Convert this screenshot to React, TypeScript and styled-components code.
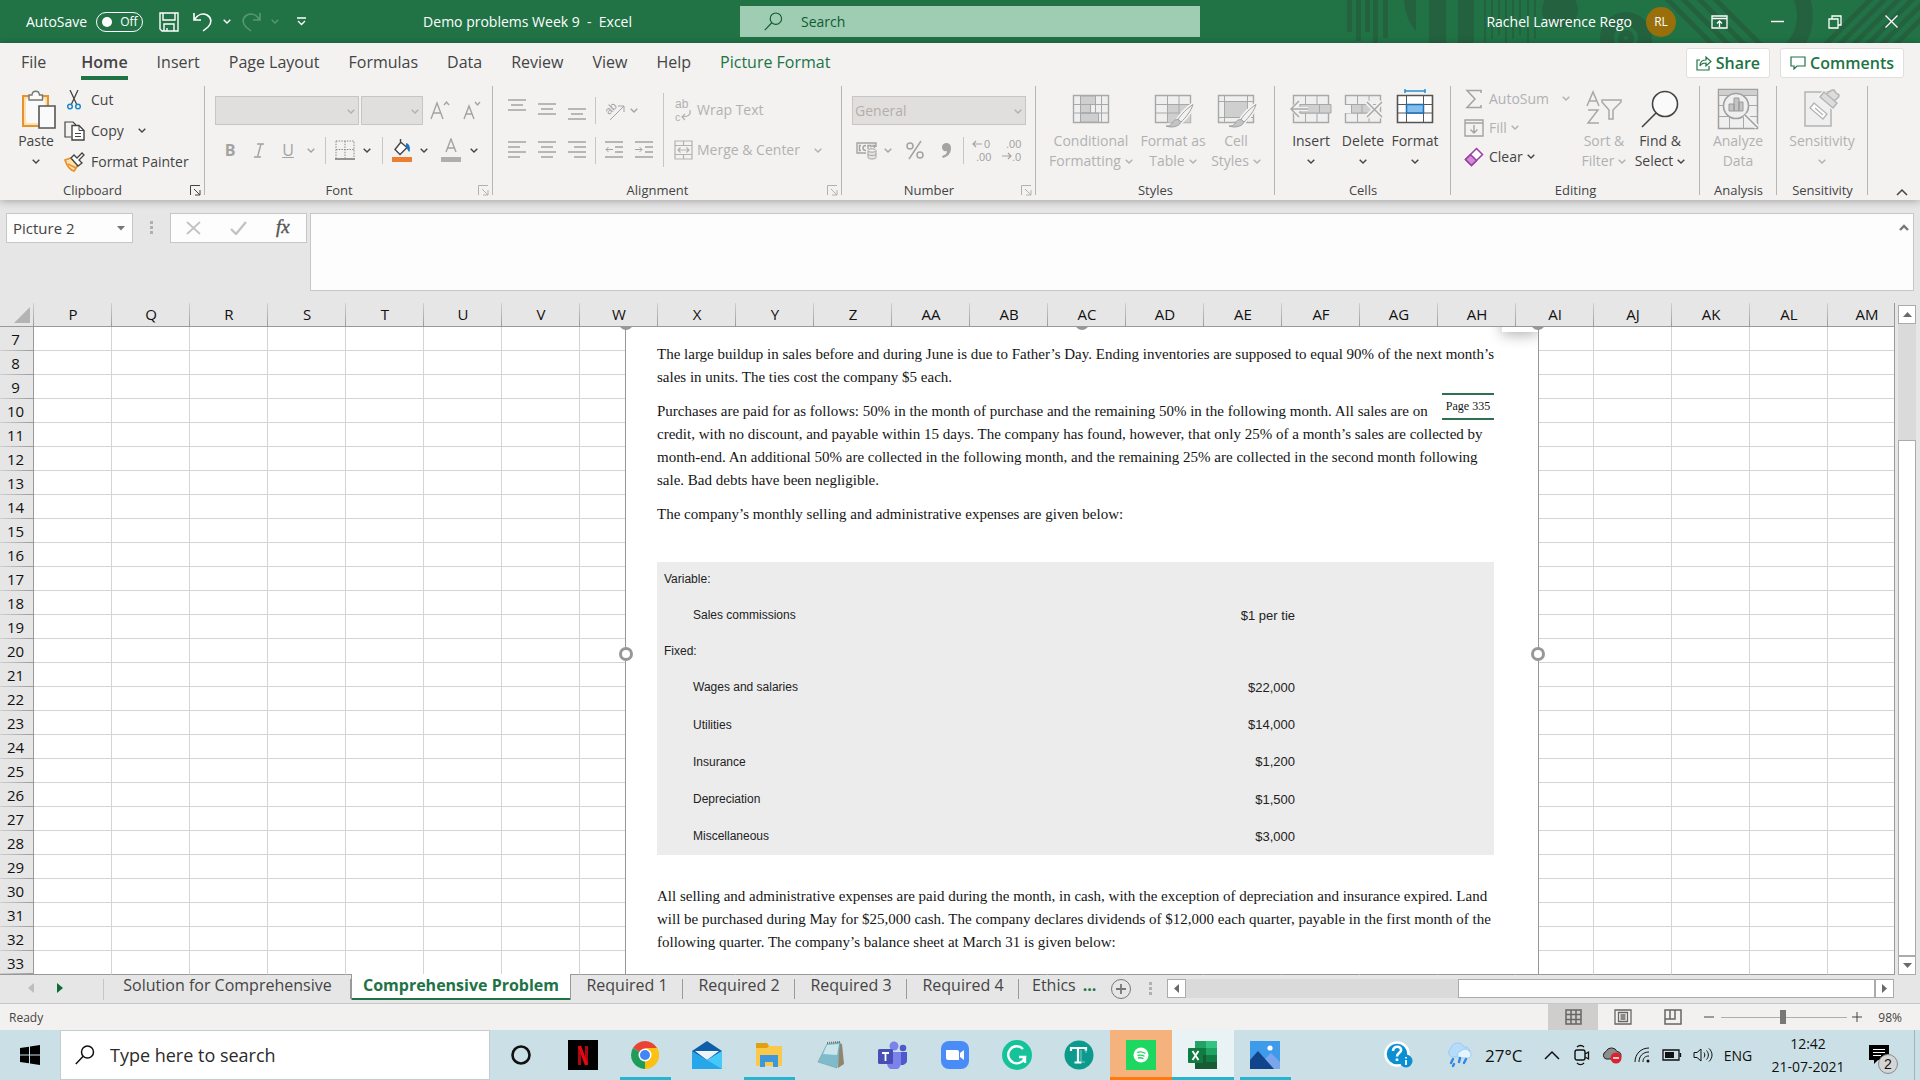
import React from 'react';
import styled, { createGlobalStyle, css } from 'styled-components';

const GREEN = '#217346';
const INK = '#444444';
const DIM = '#b1b1b1';

const GlobalStyle = createGlobalStyle`
  * { box-sizing: border-box; }
  body { margin: 0; background: #e6e6e6; }
  body, button, input, select { font-family: "Open Sans", "Noto Sans", sans-serif; }
  button { margin: 0; padding: 0; border: 0; background: none; color: inherit; font-size: inherit; }
  svg { display: block; flex: none; }
`;

const Shell = styled.div`
  display: flex;
  flex-direction: column;
  min-height: 100vh;
  overflow: hidden;
  color: ${INK};
`;

/* ---------- title bar ---------- */

const TitleBar = styled.header`
  position: relative;
  display: grid;
  grid-template-columns: 740fr 460fr 720fr;
  align-items: center;
  height: 43px;
  background: ${GREEN};
  color: #fff;
  font-size: 14px;
`;
const Pattern = styled.svg`
  position: absolute;
  right: 0;
  top: 0;
`;
const QuickAccess = styled.div`
  display: flex;
  align-items: center;
  padding-left: 26px;
  height: 43px;
`;
const Toggle = styled.button`
  display: flex;
  align-items: center;
  gap: 8px;
  width: 47px;
  height: 20px;
  margin: 0 12px 0 9px;
  padding-left: 5px;
  border: 1px solid #fff;
  border-radius: 10px;
  font-size: 12px;
  &::before {
    content: '';
    width: 10px;
    height: 10px;
    border-radius: 50%;
    background: #fff;
  }
`;
const QuickButton = styled.button<{ $w: number; $faded?: boolean }>`
  display: flex;
  align-items: center;
  justify-content: center;
  width: ${p => p.$w}px;
  height: 32px;
  opacity: ${p => (p.$faded ? 0.25 : 1)};
`;
const DocTitle = styled.div`
  margin-left: auto;
  padding-right: 108px;
  white-space: pre;
`;
const SearchBox = styled.div`
  display: flex;
  align-items: center;
  gap: 16px;
  height: 31px;
  padding-left: 24px;
  background: #9fcdb3;
  color: #0e5c2f;
`;
const SearchInput = styled.input`
  flex: 1;
  min-width: 0;
  border: 0;
  outline: 0;
  background: none;
  font-size: 14px;
  &::placeholder { color: #0e5c2f; opacity: 1; }
`;
const Account = styled.div`
  position: relative;
  display: flex;
  align-items: center;
  justify-content: flex-end;
`;
const Avatar = styled.span`
  display: grid;
  place-items: center;
  width: 30px;
  height: 30px;
  margin: 0 14px;
  border-radius: 50%;
  background: #986f0b;
  font-size: 12px;
`;

/* ---------- ribbon ---------- */

const Ribbon = styled.section`
  position: relative;
  background: #f3f2f1;
  box-shadow: 0 1px 8px rgba(0, 0, 0, 0.3);
`;
const TabRow = styled.nav`
  display: flex;
  align-items: center;
  height: 41px;
  padding: 0 16px 2px 21px;
  gap: 29px;
`;
const Tab = styled.button<{ $on?: boolean; $green?: boolean }>`
  height: 32px;
  margin-top: 2px;
  border-bottom: 4px solid ${p => (p.$on ? GREEN : 'transparent')};
  color: ${p => (p.$green ? GREEN : INK)};
  font-size: 16px;
  line-height: 22px;
  font-weight: ${p => (p.$on ? 600 : 400)};
  white-space: nowrap;
  &:first-child { margin-right: 6px; }
`;
const TabActions = styled.div`
  display: flex;
  gap: 10px;
  margin-left: auto;
`;
const ActionButton = styled.button`
  display: flex;
  align-items: center;
  gap: 4px;
  height: 30px;
  padding: 0 9px;
  border: 1px solid #e1dfdd;
  border-radius: 3px;
  background: #fff;
  color: ${GREEN};
  font-size: 16px;
  font-weight: 600;
`;
const Groups = styled.div`
  display: flex;
  height: 116px;
`;
const Group = styled.section<{ $w: number }>`
  display: flex;
  flex-direction: column;
  flex: 0 0 ${p => p.$w}px;
  height: 115px;
  background: linear-gradient(#b8b6b4, #b8b6b4) right 2px / 1px 109px no-repeat;
`;
const GroupBody = styled.div<{ $pad?: number }>`
  display: flex;
  flex: 1;
  padding-left: ${p => p.$pad ?? 0}px;
`;
const GroupLabel = styled.div`
  display: flex;
  align-items: center;
  justify-content: center;
  height: 18px;
  font-size: 13px;
  line-height: 18px;
`;
const GroupName = styled.span`
  flex: 1;
  text-align: center;
`;
const Launcher = styled.button<{ $dim?: boolean }>`
  width: 20px;
  padding-left: 5px;
  color: ${p => (p.$dim ? DIM : INK)};
`;
const Big = styled.button<{ $w: number; $dim?: boolean }>`
  display: flex;
  flex-direction: column;
  align-items: center;
  width: ${p => p.$w}px;
  padding-top: 2px;
  color: ${p => (p.$dim ? DIM : INK)};
  font-size: 14px;
  line-height: 20px;
  white-space: nowrap;
`;
const BigIcon = styled.span`
  display: grid;
  place-items: center;
  height: 45px;
`;
const BigLine = styled.span`
  display: flex;
  align-items: center;
  gap: 4px;
  height: 20px;
`;
const Stack = styled.div<{ $row: number; $w?: number }>`
  display: grid;
  grid-auto-rows: ${p => p.$row}px;
  align-content: start;
  width: ${p => (p.$w ? p.$w + 'px' : 'auto')};
`;
const Small = styled.button<{ $dim?: boolean }>`
  display: flex;
  align-items: center;
  gap: 4px;
  color: ${p => (p.$dim ? DIM : INK)};
  font-size: 14px;
  line-height: 20px;
  white-space: nowrap;
`;
const IconSlot = styled.span<{ $w: number }>`
  display: grid;
  place-items: center;
  width: ${p => p.$w}px;
`;
const Lines = styled.div`
  display: flex;
  flex-direction: column;
  padding-top: 6px;
`;
const Line = styled.div`
  display: flex;
  align-items: center;
  height: 40px;
`;
const Tool = styled.button<{ $w: number; $dark?: boolean }>`
  display: grid;
  place-items: center;
  width: ${p => p.$w}px;
  height: 30px;
  color: ${p => (p.$dark ? INK : '#a3a3a3')};
  font-size: 16px;
`;
const Rule = styled.span<{ $h?: number; $m?: string }>`
  width: 1px;
  height: ${p => p.$h ?? 27}px;
  margin: ${p => p.$m ?? '0'};
  background: #c8c6c4;
`;
const SelectWrap = styled.span<{ $w: number }>`
  position: relative;
  display: flex;
  width: ${p => p.$w}px;
  height: 29px;
  margin-right: 2px;
  color: ${DIM};
  > svg { position: absolute; right: 4px; top: 13px; pointer-events: none; }
`;
const RibbonSelect = styled.select`
  appearance: none;
  width: 100%;
  padding: 0 2px;
  border: 1px solid #c8c6c4;
  border-radius: 0;
  background: #e1dfdd;
  color: #b4aea8;
  font-size: 14px;
  opacity: 1;
`;
const Collapse = styled.button`
  align-self: flex-end;
  margin: 0 12px 4px auto;
`;

/* ---------- formula bar ---------- */

const FormulaBar = styled.div`
  display: flex;
  align-items: flex-start;
  height: 103px;
  padding: 13px 6px 0;
`;
const boxed = css`
  border: 1px solid #c6c6c6;
  background: #fdfdfd;
`;
const NameBox = styled.span`
  position: relative;
  width: 127px;
  height: 30px;
  > svg { position: absolute; right: 8px; top: 13px; pointer-events: none; }
`;
const NameSelect = styled.select`
  ${boxed}
  appearance: none;
  width: 100%;
  height: 100%;
  padding: 0 6px;
  border-radius: 0;
  color: ${INK};
  font-size: 15px;
`;
const Grip = styled.span<{ $m: string }>`
  width: 3px;
  height: 13px;
  margin: ${p => p.$m};
  background: repeating-linear-gradient(#b0b0b0 0 3px, transparent 3px 5px);
`;
const EntryTools = styled.div`
  ${boxed}
  display: grid;
  grid-template-columns: repeat(3, 1fr);
  place-items: center;
  width: 137px;
  height: 30px;
  margin-right: 3px;
`;
const FormulaField = styled.div`
  position: relative;
  flex: 1;
  display: flex;
  height: 78px;
  > svg { position: absolute; right: 5px; top: 11px; }
`;
const FormulaInput = styled.textarea`
  ${boxed}
  flex: 1;
  resize: none;
  padding: 4px 24px 4px 4px;
  border-radius: 0;
`;

/* ---------- sheet ---------- */

const SheetArea = styled.main`
  display: flex;
`;
const Sheet = styled.div`
  position: relative;
  flex: 1;
  min-width: 0;
  overflow: hidden;
  border-right: 1px solid #999;
`;
const Grid = styled.table`
  table-layout: fixed;
  width: 1906px;
  border-collapse: separate;
  border-spacing: 0;
  color: #111;
  font-size: 15px;
  line-height: 20px;
  td, th { height: 24px; padding: 0; font-weight: 400; text-align: center; }
  td {
    background: #fff;
    border-right: 1px solid #d4d4d4;
    border-bottom: 1px solid #d4d4d4;
  }
  thead th {
    padding-bottom: 2px;
    border-bottom: 1px solid #999;
    background: linear-gradient(#d0d0d0, #9b9b9b) right top / 1px 100% no-repeat #e6e6e6;
  }
  tbody th {
    padding-right: 2px;
    border-right: 1px solid #999;
    background: linear-gradient(90deg, #d0d0d0, #9b9b9b) left bottom / 100% 1px no-repeat #e6e6e6;
  }
  tbody tr:last-child > * { border-bottom: 1px solid #999; }
`;
const Corner = styled.span`
  display: block;
  width: 0;
  margin: 3px 4px 0 auto;
  border-left: 16px solid transparent;
  border-bottom: 16px solid #b4b4b4;
`;
const Canvas = styled.div`
  position: absolute;
  inset: 24px 0 1px 34px;
  overflow: hidden;
  pointer-events: none;
`;
const Picture = styled.article`
  position: absolute;
  left: 591px;
  top: 0;
  width: 914px;
  height: 100%;
  padding: 16px 44px 0 31px;
  border: solid #979797;
  border-width: 0 1px;
  background: #fff;
  color: #151515;
  font-family: "Liberation Serif", serif;
  font-size: 15px;
`;
const Para = styled.p`
  margin: 0 0 11px;
  line-height: 23px;
  white-space: nowrap;
`;
const PageTag = styled.span`
  float: right;
  width: 52px;
  height: 27px;
  margin-top: -7px;
  border: solid #2c7250;
  border-width: 2px 0;
  font-size: 12px;
  line-height: 22px;
  text-align: center;
`;
const Expenses = styled.table`
  width: 837px;
  height: 293px;
  margin: 36px 0 30px;
  border-collapse: collapse;
  background: #ececec;
  color: #222;
  font-family: "Liberation Sans", sans-serif;
  font-size: 13px;
  th, td { padding: 0; font-weight: 400; text-align: left; }
  td { width: 638px; padding-right: 199px; text-align: right; }
`;
const RowName = styled.th<{ $indent?: boolean }>`
  && {
    width: 200px;
    padding-left: ${p => (p.$indent ? 36 : 7)}px;
    font-size: 12px;
    white-space: nowrap;
  }
`;
const Handle = styled.span<{ $x: number; $y: number }>`
  position: absolute;
  left: ${p => p.$x}px;
  top: ${p => p.$y}px;
  width: 14px;
  height: 14px;
  border: 3px solid #979797;
  border-radius: 50%;
  background: #fff;
`;
const Floating = styled.span`
  position: absolute;
  right: 0;
  top: -20px;
  width: 36px;
  height: 25px;
  background: #fff;
  box-shadow: 0 3px 14px rgba(0, 0, 0, 0.3);
  clip-path: inset(0 0 -20px -20px);
`;
const VScroll = styled.div`
  display: flex;
  flex-direction: column;
  width: 25px;
  padding: 2px 4px 0 3px;
`;
const Track = styled.div<{ $grow: number }>`
  flex: ${p => p.$grow} 1 0;
  background: #dadada;
`;
const Thumb = styled.div<{ $grow: number }>`
  flex: ${p => p.$grow} 1 0;
  border: 1px solid #ababab;
  background: #fff;
`;
const ScrollButton = styled.button`
  display: grid;
  place-items: center;
  flex: 0 0 19px;
  min-width: 18px;
  border: 1px solid #ababab;
  background: #fff;
  color: #6a6a6a;
`;

/* ---------- sheet tabs and status ---------- */

const SheetTabs = styled.div`
  display: flex;
  align-items: flex-start;
  height: 29px;
  border-bottom: 1px solid #c6c6c6;
  font-size: 16px;
  line-height: 20px;
`;
const TabArrows = styled.div`
  display: flex;
  gap: 23px;
  width: 103px;
  padding: 8px 0 0 28px;
`;
const SheetTab = styled.button<{ $on?: boolean; $w: number }>`
  width: ${p => p.$w}px;
  height: 26px;
  margin-top: -1px;
  padding-bottom: 4px;
  line-height: 20px;
  white-space: nowrap;
  ${p =>
    p.$on
      ? css`
          position: relative;
          border: solid #999;
          border-width: 0 1px;
          box-shadow: inset 0 -2px ${GREEN};
          background: #fff;
          color: ${GREEN};
          font-weight: 700;
        `
      : css`
          background: linear-gradient(#999, #999) right 5px / 1px 20px no-repeat;
        `}
`;
const LastTab = styled.button`
  padding-left: 13px;
  line-height: 20px;
`;
const More = styled.span`
  width: 27px;
  margin-left: 7px;
  color: ${GREEN};
  font-weight: 700;
`;
const HScroll = styled.div`
  display: flex;
  flex: 1;
  height: 19px;
  margin: 4px 26px 0 0;
`;
const StatusBar = styled.footer`
  display: flex;
  align-items: center;
  height: 26px;
  padding: 0 18px 0 9px;
  background: #f3f1ef;
  font-size: 12px;
`;
const StatusText = styled.span`
  margin-right: auto;
`;
const ViewButton = styled.button<{ $on?: boolean }>`
  display: grid;
  place-items: center;
  width: 50px;
  height: 26px;
  background: ${p => (p.$on ? '#d0cecd' : 'transparent')};
  color: #666;
`;
const Zoom = styled.input`
  appearance: none;
  width: 126px;
  height: 16px;
  margin: 0 5px 0 7px;
  background: linear-gradient(#b0aeac, #b0aeac) center / 100% 1px no-repeat;
  &::-webkit-slider-thumb {
    appearance: none;
    width: 6px;
    height: 14px;
    background: #777;
  }
`;
const Percent = styled.span`
  width: 40px;
  text-align: right;
`;

/* ---------- taskbar ---------- */

const Taskbar = styled.footer`
  display: flex;
  align-items: center;
  height: 50px;
  background: #cbe0e6;
  color: #111;
  font-size: 14px;
`;
const Start = styled.button`
  display: grid;
  place-items: center;
  width: 60px;
  height: 50px;
`;
const TaskSearch = styled.div`
  display: flex;
  align-items: center;
  gap: 13px;
  width: 430px;
  height: 50px;
  padding-left: 14px;
  border: 1px solid #c3cdd0;
  background: #fff;
`;
const TaskInput = styled.input`
  flex: 1;
  min-width: 0;
  border: 0;
  outline: 0;
  font-size: 18px;
  &::placeholder { color: #2b2b2b; opacity: 1; }
`;
const AppIcon = styled.button<{ $state?: string }>`
  display: grid;
  place-items: center;
  width: 62px;
  height: 50px;
  background: ${p =>
    p.$state === 'alert'
      ? 'linear-gradient(#ff7a0a, #ff7a0a) bottom / 100% 3px no-repeat #f5b27c'
      : p.$state === 'active'
        ? 'linear-gradient(#26b5cf, #26b5cf) bottom / 100% 3px no-repeat #e9f2f5'
        : p.$state === 'open'
          ? 'linear-gradient(#26b5cf, #26b5cf) bottom / 51px 3px no-repeat'
          : 'none'};
`;
const Tray = styled.div`
  display: flex;
  align-items: center;
  height: 50px;
  margin-left: auto;
  padding-right: 5px;
`;
const TrayItem = styled.button<{ $w: number }>`
  display: grid;
  place-items: center;
  width: ${p => p.$w}px;
  height: 50px;
`;
const Temp = styled.span`
  width: 52px;
  font-size: 17px;
`;
const Clock = styled.time`
  display: grid;
  width: 102px;
  text-align: center;
  line-height: 23px;
`;
const Notice = styled.button`
  display: flex;
  width: 56px;
  height: 50px;
  padding: 14px 0 0 10px;
  border-right: 1px solid #9fb4bb;
`;

/* ---------- drawings ---------- */

const Svg = ({ w, h, children, vb }: { w: number; h: number; vb?: string; children: React.ReactNode }) => (
  <svg width={w} height={h} viewBox={vb ?? `0 0 ${w} ${h}`} fill="none" stroke="currentColor" aria-hidden="true">
    {children}
  </svg>
);
const Glyph = ({ x, y, size, children }: { x: number; y: number; size: number; children: string }) => (
  <text x={x} y={y} fontSize={size} fontFamily="Liberation Sans, sans-serif" fill="currentColor" stroke="none">{children}</text>
);
const Chev = () => (
  <Svg w={8} h={5}><path d="M.7.7 4 4 7.3.7" strokeWidth="1.4" /></Svg>
);
const LaunchIcon = () => (
  <Svg w={11} h={11}><path d="M.5 10V.5H10M4 4l6 6M10 5v5H5" /></Svg>
);
const Mag = ({ s, w = 1.2 }: { s: number; w?: number }) => (
  <Svg w={s} h={s} vb="0 0 20 20"><circle cx="12.5" cy="7" r="6" strokeWidth={w} /><path d="M8.2 11.3.8 19" strokeWidth={w} /></Svg>
);
const Tri = ({ d }: { d: string }) => (
  <Svg w={9} h={9}><path d={d} fill="currentColor" stroke="none" /></Svg>
);
const UP = 'M0 7h9L4.5 2z', DOWN = 'M0 2h9L4.5 7z', LEFT = 'M7 0v9L2 4.5z', RIGHT = 'M2 0v9l5-4.5z';

const TextLines = ({ rows }: { rows: [number, number][] }) => (
  <Svg w={18} h={24}>
    {rows.map(([y, w], i) => <path key={i} d={`M${(18 - w) / 2} ${y}h${w}`} strokeWidth="1.5" />)}
  </Svg>
);
const AlignLines = ({ side }: { side: number }) => (
  <Svg w={18} h={18}>
    {[18, 12, 18, 12].map((w, i) => <path key={i} d={`M${((18 - w) * side) / 2} ${1 + i * 5}h${w}`} strokeWidth="1.5" />)}
  </Svg>
);
const Indent = ({ flip }: { flip?: boolean }) => (
  <Svg w={18} h={18}>
    <path d="M0 1h18M10 6h8M10 11h8M0 16h18" strokeWidth="1.5" />
    <path d={flip ? 'M0 8.5h7M4.5 6 7 8.5 4.5 11' : 'M8 8.5H1M3.5 6 1 8.5 3.5 11'} />
  </Svg>
);
const TableIcon = ({ children, dark }: { children?: React.ReactNode; dark?: boolean }) => (
  <Svg w={42} h={40} vb="0 2 42 40">
    <path d="M3.5 8.5h35v27h-35z" fill={dark ? '#fff' : '#efefef'} strokeWidth={dark ? 1.6 : 1.4} stroke={dark ? '#555' : '#a8a8a8'} />
    {children}
  </Svg>
);
const Brush = () => (
  <g>
    <path d="M41 17.5c-6 4-12 10-15 15l3 2.500c5-4.500 10-11 12-17.500z" fill="#fff" stroke="#f3f2f1" strokeWidth="4" />
    <path d="M41 17.5c-6 4-12 10-15 15l3 2.500c5-4.500 10-11 12-17.500z" fill="#f3f2f1" stroke="#a0a0a0" />
    <path d="M26 32.5c-4 0-5 2-6 4-1 2-3 2.500-6 2.500 5 2 13 1 15-4z" fill="#c4c4c4" stroke="#a0a0a0" />
  </g>
);

const icons = {
  paste: (
    <Svg w={42} h={40} vb="-6 -1 42 40">
      <path d="M2 6h25v30H2z" fill="#fbe2ae" stroke="#e8912d" strokeWidth="2" />
      <path d="M5 9h19v24H5z" fill="#fafafa" stroke="none" />
      <path d="M8 10V5h3c.5-5 7-5 7.500 0h3v5z" fill="#fafafa" stroke="#777" strokeWidth="1.4" />
      <path d="M18 16h16v22H18z" fill="#fafafa" stroke="#555" strokeWidth="1.6" />
    </Svg>
  ),
  cut: (
    <Svg w={14} h={20}>
      <path d="m3 0 6.500 14M11 0 4.500 14" strokeWidth="1.3" />
      <circle cx="3" cy="16.5" r="2.3" stroke="#1a86c8" strokeWidth="1.5" /><circle cx="11" cy="16.5" r="2.3" stroke="#1a86c8" strokeWidth="1.5" />
    </Svg>
  ),
  copy: (
    <Svg w={21} h={20}>
      <path d="M7 16H1V1h8l3 3" strokeWidth="1.2" /><path d="M8 4.5h7l5 5V19H8z" fill="#fff" strokeWidth="1.4" />
      <path d="M15 4.5v5h5M11 12.500h6M11 15.500h6" />
    </Svg>
  ),
  painter: (
    <Svg w={21} h={20}>
      <path d="m1 8 6-2 7 7-4 6C6 18 3 14 1 8z" fill="#fbe2ae" stroke="#e8912d" strokeWidth="1.8" />
      <path d="m4 12 8 4" stroke="#e8912d" strokeWidth="1.4" />
      <path d="m7 6 3-3 3 3 5-5 2 2-5 5 3 3-4 3z" fill="#fff" strokeWidth="1.3" />
    </Svg>
  ),
  borders: (
    <Svg w={20} h={20}>
      <path d="M1 1h18v17M1 1v17M10 1v17M1 9.500h18" strokeDasharray="1.5 1.2" stroke="#888" /><path d="M0 19h20" stroke="#888" strokeWidth="1.8" />
    </Svg>
  ),
  fill: (
    <Svg w={20} h={24}>
      <path d="M0 19h20v5H0z" fill="#ed7d31" stroke="none" />
      <path d="m9 4-6 7.500 5 5 7-7L8.500 4V1" fill="#fff" strokeWidth="1.4" /><path d="M14 5c4 1 4.500 5 3.500 9-2-1-2-3-3.500-6z" fill="#1a75c0" stroke="none" />
    </Svg>
  ),
  orient: (
    <Svg w={26} h={28}>
      <g transform="rotate(-45 10 13)"><Glyph x={4} y={16} size={11}>ab</Glyph></g>
      <path d="M9 24 23 10M23 16v-6h-6" />
    </Svg>
  ),
  wrap: (
    <Svg w={20} h={26}>
      <Glyph x={2} y={11} size={12}>ab</Glyph>
      <Glyph x={2} y={24} size={11}>c</Glyph>
      <path d="M17 13c1 5-2 7-8 7M12 17l-3 3 3 3" strokeWidth="1.2" />
    </Svg>
  ),
  merge: (
    <Svg w={19} h={20}>
      <path d="M1 1h17v18H1zM1 5.500h17M1 14.500h17M9.500 1v4.500M9.500 14.500V19M4 10h11M6.500 7.500 4 10l2.500 2.500M12.500 7.500 15 10l-2.500 2.500" strokeWidth="1.2" />
    </Svg>
  ),
  money: (
    <Svg w={21} h={20}>
      <path d="M10 13H1V3h19v4M5 5.500H3.500v5H5M10 5.500c-4 0-4 5 0 5M12 9V5.500h3v2M17 7V5.500h1.500V8" strokeWidth="1.4" />
      <path d="M12 11v6.500c0 2 8 2 8 0V11" fill="#e4e4e4" /><ellipse cx="16" cy="10.500" rx="4" ry="1.7" fill="#f3f2f1" /><path d="M12 14c0 2 8 2 8 0" />
    </Svg>
  ),
  decUp: (
    <Svg w={24} h={26}>
      <Glyph x={14} y={11} size={11}>0</Glyph>
      <Glyph x={6} y={24} size={11}>.00</Glyph>
      <path d="M12 7H3M6 4 3 7l3 3" strokeWidth="1.2" />
    </Svg>
  ),
  decDown: (
    <Svg w={24} h={26}>
      <Glyph x={6} y={11} size={11}>.00</Glyph>
      <Glyph x={12} y={24} size={11}>.0</Glyph>
      <path d="M2 19h9M8 16l3 3-3 3" strokeWidth="1.2" />
    </Svg>
  ),
  cond: (
    <TableIcon>
      <path d="M10.500 9h15v8.500h-15zM10.500 17.500h10V26h-10zM10.500 26h18v9h-18z" fill="#cfcfcf" stroke="#a8a8a8" />
      <path d="M4 17.500h34M4 26h34M31.500 9v26M25.500 17v9" stroke="#a8a8a8" />
    </TableIcon>
  ),
  fmtTable: (
    <TableIcon>
      <path d="M15.500 17.500h23v18h-23z" fill="#cfcfcf" stroke="none" /><path d="M4 17.500h34M4 26h34M15.500 9v26M27 9v26" stroke="#a8a8a8" /><Brush />
    </TableIcon>
  ),
  cellStyles: (
    <TableIcon>
      <path d="M10 15h22v15H10z" fill="#cfcfcf" stroke="none" /><path d="M4 14.500h34M4 30.500h34M9.500 9v26M32.500 9v26" stroke="#a8a8a8" /><Brush />
    </TableIcon>
  ),
  insert: (
    <TableIcon>
      <path d="M4 17.500h34M4 26h34M15.500 9v26M27 9v26" stroke="#a8a8a8" /><path d="M10 17.500h31V26H10z" fill="#cfcfcf" stroke="#a8a8a8" /><path d="M29.500 18v8" stroke="#a8a8a8" />
      <path d="M18 22H2M10 14l-8 8 8 8" stroke="#f3f2f1" strokeWidth="4" /><path d="M18 22H2M9 14l-8 8 8 8" stroke="#a8a8a8" strokeWidth="1.5" />
    </TableIcon>
  ),
  del: (
    <TableIcon>
      <path d="M4 17.500h34M4 26h34M15.500 9v26M27 9v26" stroke="#a8a8a8" /><path d="M2 18h8v8H2z" fill="#f3f2f1" stroke="none" /><path d="M9.500 17.500H29V26H9.500zM20 18v8" fill="#cfcfcf" stroke="#a8a8a8" />
      <path d="m25 15 15 15M40 15 25 30" stroke="#f3f2f1" strokeWidth="5" /><path d="m25 15 15 15M40 15 25 30" stroke="#a8a8a8" strokeWidth="1.5" />
    </TableIcon>
  ),
  format: (
    <TableIcon dark>
      <path d="M4 17.500h34M4 26h34M12.500 9v26M29.500 9v26" stroke="#555" /><path d="M12.500 17.500h17V26h-17z" fill="#83beec" stroke="#1a6fb5" strokeWidth="1.5" />
      <path d="M11 4h20M11 2v4M31 2v4" stroke="#2a8dd4" strokeWidth="1.5" />
    </TableIcon>
  ),
  sigma: <Svg w={18} h={20}><path d="M16 4V1.500H2L10 10 2 18.500h14V16" strokeWidth="1.5" stroke="#a3a3a3" /></Svg>,
  fillDown: <Svg w={20} h={18}><path d="M1 1h18v16H1zM1 4h18M10 6v8M6.500 10.500 10 14l3.500-3.500" stroke="#a3a3a3" strokeWidth="1.4" /></Svg>,
  eraser: <Svg w={20} h={20}><path d="m1.500 12.500 11-11 6 6-11 11z" fill="#fff" stroke="#9b3ba3" strokeWidth="1.5" /><path d="m1.500 12.500 5-5 6 6-5 5z" fill="#d08ad6" stroke="#9b3ba3" strokeWidth="1.5" /></Svg>,
  sort: (
    <Svg w={38} h={38}>
      <path d="m2 16 6-14 6 14M4 11h8M3 20h10L3 33h11" strokeWidth="1.5" stroke="#a8a8a8" /><path d="M17 10h19v2l-8 8v9h-4v-9l-7-8z" stroke="#a8a8a8" strokeWidth="1.5" />
    </Svg>
  ),
  find: <Svg w={38} h={40}><circle cx="24" cy="15" r="12.5" fill="#fafafa" strokeWidth="1.6" /><path d="M15 24 1 38" strokeWidth="1.6" /></Svg>,
  analyze: (
    <Svg w={42} h={42}>
      <path d="M1.500 1.500h39v39h-39z" fill="#efefef" stroke="#a0a0a0" strokeWidth="1.5" /><path d="M2 2h38v5H2z" fill="#cfcfcf" stroke="none" />
      <path d="M2 7.500h38M2 17.500h38M2 28.500h38M12.500 28v12M26.500 28v12" stroke="#a8a8a8" /><circle cx="19" cy="18" r="12.5" fill="#efefef" stroke="#a0a0a0" strokeWidth="1.6" />
      <path d="m28 27 12 12" stroke="#f3f2f1" strokeWidth="5" /><path d="m28 27 12 12" stroke="#a0a0a0" strokeWidth="1.6" /><path d="M12 16h5v7h-5zM17 10h5v13h-5zM22 14h4v9h-4z" fill="#c4c4c4" stroke="#999" />
    </Svg>
  ),
  sensitivity: (
    <Svg w={38} h={42}>
      <path d="M2 4h26v34H2z" fill="#efefef" stroke="#b4b4b4" strokeWidth="1.5" /><path d="m11 15 13 11-4 5L7 20zM12 20l8 7" fill="#fff" stroke="#b4b4b4" strokeWidth="1.3" />
      <path d="m17 9 4-5 13 11-4 5z" fill="#dcdcdc" stroke="#f3f2f1" strokeWidth="4" /><path d="m17 9 4-5 13 11-4 5zM23 6c3-1 4-5 8-4l2 3 3 2c0 4-4 4-5 6" fill="#dcdcdc" stroke="#b4b4b4" strokeWidth="1.5" />
    </Svg>
  ),
};

const taskIcons: [string, React.ReactNode, string?][] = [
  ['Cortana', <Svg w={22} h={22}><circle cx="11" cy="11" r="8.5" stroke="#111" strokeWidth="2.6" /></Svg>],
  ['Netflix', <Svg w={30} h={30}><path d="M0 0h30v30H0z" fill="#000" stroke="none" /><path d="M11.500 6v19M18.500 6v19" stroke="#b1060f" strokeWidth="3" /><path d="m11.500 6 7 19" stroke="#e50914" strokeWidth="3.2" /></Svg>],
  ['Chrome', (
    <Svg w={28} h={28}>
      <path d="M14 14 1.900 7A14 14 0 0 1 26.100 7z" fill="#ea4335" stroke="none" /><path d="M14 14 26.100 7A14 14 0 0 1 14 28z" fill="#fbbc04" stroke="none" />
      <path d="M14 14v14A14 14 0 0 1 1.900 7z" fill="#1e9d58" stroke="none" /><path d="M14 7h12.100A14 14 0 0 1 14 28l6-10.500z" fill="#fbc116" stroke="none" />
      <circle cx="14" cy="14" r="6.5" fill="#fff" stroke="none" /><circle cx="14" cy="14" r="5" fill="#4285f4" stroke="none" />
    </Svg>
  ), 'open'],
  ['Mail', <Svg w={30} h={28}><path d="M0 10 15 0l15 10v18H0z" fill="#0f5ea8" stroke="none" /><path d="M3 10h24L15 19z" fill="#eef3f7" stroke="none" /><path d="m0 10 15 9 15-9v18H0z" fill="#27a6ea" stroke="none" /><path d="m15 19 15-9v18z" fill="#46c8f9" stroke="none" /></Svg>],
  ['File Explorer', <Svg w={28} h={26}><path d="M1 1h11l2 3h13v20H1z" fill="#fbc94a" stroke="none" /><path d="M1 1h11l2 3-2 2H1z" fill="#e0a015" stroke="none" /><path d="M5 25V13h18v12h-5v-5h-8v5z" fill="#3d97dc" stroke="none" /></Svg>, 'open'],
  ['Notepad', <Svg w={28} h={28}><path d="m22 2 3 1 2 20-6 4z" fill="#8f8570" stroke="none" /><path d="M10 3 23 1l-3 26-19-6z" fill="#7fbccb" stroke="#6f9fa9" strokeWidth=".6" /><path d="M10 4 22 3l-2 11-14-1z" fill="#c8e6ec" stroke="none" /><path d="m10 2 13-1" stroke="#777" strokeDasharray="1 1" strokeWidth="2" /></Svg>],
  ['Teams', (
    <Svg w={30} h={28}>
      <circle cx="16" cy="5" r="4.5" fill="#7b83eb" stroke="none" /><circle cx="25" cy="7" r="3.3" fill="#5059c9" stroke="none" /><path d="M19 11h10v9a5 5 0 0 1-8 3z" fill="#5059c9" stroke="none" />
      <path d="M8 11h15v10a7 7 0 0 1-14 2z" fill="#7b83eb" stroke="none" /><rect y="8" width="15" height="15" rx="1.5" fill="#464eb8" stroke="none" /><path d="M4 12h7M7.500 12v8" stroke="#fff" strokeWidth="1.8" />
    </Svg>
  )],
  ['Zoom', <Svg w={28} h={28}><rect width="28" height="28" rx="8" fill="#4a8cf7" stroke="none" /><path d="M5 9h11a2 2 0 0 1 2 2v8H7a2 2 0 0 1-2-2zM19 12l4-3v10l-4-3z" fill="#fff" stroke="none" /></Svg>],
  ['Grammarly', <Svg w={30} h={30}><circle cx="15" cy="15" r="15" fill="#15c39a" stroke="none" /><path d="M21 9a8.500 8.500 0 1 0 2 8h-6M23 17v6" stroke="#fff" strokeWidth="2.4" /></Svg>],
  ['Thesaurus', <Svg w={30} h={30}><circle cx="15" cy="15" r="14.5" fill="#0c9a8d" stroke="none" /><path d="M7 11V8h15v3M14 8v14M10.500 22.500h7" stroke="#fff" strokeWidth="2.2" /><path d="M17 10v12h4M22 13v-3h-2" stroke="#7fd0c7" /></Svg>],
  ['Spotify', <Svg w={30} h={30}><path d="M0 0h30v30H0z" fill="#1ed760" stroke="none" /><circle cx="15" cy="15" r="7.5" fill="#fff" stroke="none" /><path d="M11 12.500c3-1 6-.5 8.500 1M11.500 15.500c2.500-.7 5-.3 7 .8M12 18c2-.5 4-.2 5.500.7" stroke="#1ed760" strokeWidth="1.3" /></Svg>, 'alert'],
  ['Excel', (
    <Svg w={30} h={28}>
      <path d="M7 0h22v28H7z" fill="#21a366" stroke="none" /><path d="M18 0h11v7H18z" fill="#33c481" stroke="none" /><path d="M7 7h11v7H7zM18 14h11v7H18z" fill="#107c41" stroke="none" /><path d="M7 21h22v7H7zM7 14h11v7H7z" fill="#185c37" stroke="none" />
      <rect y="7" width="15" height="15" rx="1" fill="#107c41" stroke="none" /><path d="m4.500 10 6 9M10.500 10l-6 9" stroke="#fff" strokeWidth="1.9" />
    </Svg>
  ), 'active'],
  ['Photos', <Svg w={30} h={28}><path d="M0 0h30v28H0z" fill="#3e9bea" stroke="none" /><path d="m12 21 9-9 9 9v7H12z" fill="#7ba6ec" stroke="none" /><path d="m0 19 8-9 16 18H0z" fill="#12448c" stroke="none" /><circle cx="20" cy="7" r="2.6" fill="#fff" stroke="none" /></Svg>, 'open'],
];

const BigButton = ({ w, icon, a, b, arrow, dim }: { w: number; icon: React.ReactNode; a: string; b?: string; arrow?: boolean; dim?: boolean }) => (
  <Big $w={w} $dim={dim}>
    <BigIcon>{icon}</BigIcon>
    <BigLine>{a}</BigLine>
    <BigLine>{b}{arrow && <Chev />}</BigLine>
  </Big>
);
const Caption = ({ children, launch, dim }: { children: string; launch?: boolean; dim?: boolean }) => (
  <GroupLabel>
    <GroupName>{children}</GroupName>
    {launch && <Launcher $dim={dim} aria-label={`${children} settings`}><LaunchIcon /></Launcher>}
  </GroupLabel>
);

const columns = ['P','Q','R','S','T','U','V','W','X','Y','Z','AA','AB','AC','AD','AE','AF','AG','AH','AI','AJ','AK','AL','AM'];
const rowNumbers = Array.from({ length: 27 }, (_, i) => i + 7);
const expenses: [string, string?][] = [
  ['Variable:'], ['Sales commissions', '$1 per tie'], ['Fixed:'], ['Wages and salaries', '$22,000'],
  ['Utilities', '$14,000'], ['Insurance', '$1,200'], ['Depreciation', '$1,500'], ['Miscellaneous', '$3,000'],
];
const sheetTabs: [string, number][] = [
  ['Solution for Comprehensive', 247], ['Comprehensive Problem', 220], ['Required 1', 112],
  ['Required 2', 112], ['Required 3', 112], ['Required 4', 112],
];

const TopBar = () => (
  <TitleBar>
    <Pattern width="580" height="43" viewBox="0 0 580 43" fill="#24623f" aria-hidden="true">
      <path d="M7 0h5v32H7zM16 0h5v41h-5zM25 0h5v32h-5zM33 0h5v43h-5zM43 0h5v38h-5zM64 0h12v31C68 22 65 12 64 0zM89 0h17v43H89zM118 0h16v43h-16z" />
      {[144, 151, 158, 165, 172, 179, 187, 194].map((x, i) => <path key={x} d={`M${x} 0h2v${43 - (i % 3) * 4}h-2z`} />)}
      <circle cx="220" cy="10" r="18" />
      <g fill="none" stroke="#24623f">
        <circle cx="286" cy="38" r="19" strokeWidth="14" /><circle cx="286" cy="38" r="5" strokeWidth="6" />
        <path d="m322-6 54 54M338-6l54 54M354-6l54 54M370-6l54 54" strokeWidth="5" />
        <circle cx="418" cy="16" r="47" strokeWidth="16" strokeDasharray="110 190" strokeDashoffset="50" />
        <path d="m484 46 50-50M498 46l50-50M512 46l50-50M526 46l50-50M540 46l44-44M554 46l30-30" strokeWidth="5" />
      </g>
    </Pattern>
    <QuickAccess>
      AutoSave
      <Toggle>Off</Toggle>
      <QuickButton $w={28} aria-label="Save"><Svg w={20} h={20}><path d="M1 1h18v18H3l-2-2zM4 1v7h12V1M5 19v-7h10v7M8 19v-3" strokeWidth="1.4" /></Svg></QuickButton>
      <QuickButton $w={40} aria-label="Undo"><Svg w={20} h={20}><path d="M1 1v7h7M1.500 7.500C5 2 10 1 14 3c5 3 5 8 1 12l-5 4" strokeWidth="1.6" /></Svg></QuickButton>
      <QuickButton $w={8} aria-label="Undo history"><Chev /></QuickButton>
      <QuickButton $w={40} $faded aria-label="Redo"><Svg w={20} h={20}><path d="M19 1v7h-7M18.500 7.500C15 2 10 1 6 3c-5 3-5 8-1 12l5 4" strokeWidth="1.6" /></Svg></QuickButton>
      <QuickButton $w={8} $faded aria-label="Redo history"><Chev /></QuickButton>
      <QuickButton $w={44} aria-label="Customize toolbar"><Svg w={9} h={9}><path d="M0 1h9M1 4l3.500 3.500L8 4" strokeWidth="1.3" /></Svg></QuickButton>
      <DocTitle>{'Demo problems Week 9  -  Excel'}</DocTitle>
    </QuickAccess>
    <SearchBox>
      <Mag s={19} />
      <SearchInput aria-label="Search" placeholder="Search" />
    </SearchBox>
    <Account>
      Rachel Lawrence Rego
      <Avatar>RL</Avatar>
      <QuickButton $w={58} aria-label="Ribbon display options"><Svg w={17} h={14}><path d="M1 1h15v12H1zM1 3.500h15M8.500 12V6M6 8.500 8.500 6 11 8.500" strokeWidth="1.3" /></Svg></QuickButton>
      <QuickButton $w={58} aria-label="Minimize"><Svg w={13} h={3}><path d="M0 1.500h13" strokeWidth="1.4" /></Svg></QuickButton>
      <QuickButton $w={57} aria-label="Restore"><Svg w={14} h={14}><path d="M1 4h9v9H1zM4 4V1h9v9h-3" strokeWidth="1.3" /></Svg></QuickButton>
      <QuickButton $w={57} aria-label="Close"><Svg w={13} h={13}><path d="m.5.5 12 12M12.500.5l-12 12" strokeWidth="1.3" /></Svg></QuickButton>
    </Account>
  </TitleBar>
);

const RibbonBar = () => (
  <Ribbon>
    <TabRow>
      {['File', 'Home', 'Insert', 'Page Layout', 'Formulas', 'Data', 'Review', 'View', 'Help', 'Picture Format'].map(t => (
        <Tab key={t} $on={t === 'Home'} $green={t === 'Picture Format'}>{t}</Tab>
      ))}
      <TabActions>
        <ActionButton><Svg w={16} h={16}><path d="M4 5H1v10h12v-4M4 11c0-5 3-6 6-6V2l5 4.500L10 11V8C7 8 5 9 4 11z" strokeWidth="1.2" /></Svg>Share</ActionButton>
        <ActionButton><Svg w={16} h={14}><path d="M1 1h14v9H7l-3 3v-3H1z" strokeWidth="1.2" /></Svg>Comments</ActionButton>
      </TabActions>
    </TabRow>
    <Groups>
      <Group $w={205}>
        <GroupBody $pad={11}>
          <BigButton w={50} icon={icons.paste} a="Paste" arrow />
          <Stack $row={31}>
            <Small><IconSlot $w={26}>{icons.cut}</IconSlot><span>Cut</span></Small>
            <Small><IconSlot $w={26}>{icons.copy}</IconSlot><span>Copy</span><IconSlot $w={28}><Chev /></IconSlot></Small>
            <Small><IconSlot $w={26}>{icons.painter}</IconSlot><span>Format Painter</span></Small>
          </Stack>
        </GroupBody>
        <Caption launch>Clipboard</Caption>
      </Group>
      <Group $w={288}>
        <GroupBody $pad={10}>
          <Lines>
            <Line>
              <SelectWrap $w={144}><RibbonSelect disabled aria-label="Font name" /><Chev /></SelectWrap>
              <SelectWrap $w={62}><RibbonSelect disabled aria-label="Font size" /><Chev /></SelectWrap>
              <Tool $w={30} aria-label="Grow font"><Svg w={20} h={20}><path d="m1 19 6-16 6 16M3 13h8M14 5l2.500-3L19 5" strokeWidth="1.4" /></Svg></Tool>
              <Tool $w={34} aria-label="Shrink font"><Svg w={18} h={20}><path d="m1 19 5-13 5 13M3 14h6M12 2l2.500 3L17 2" strokeWidth="1.4" /></Svg></Tool>
            </Line>
            <Line>
              <Tool $w={30} aria-label="Bold"><b>B</b></Tool>
              <Tool $w={28} aria-label="Italic"><Svg w={12} h={15}><path d="M4 1h7M1 14h7M8 1 4.500 14" strokeWidth="1.4" /></Svg></Tool>
              <Tool $w={30} aria-label="Underline"><u>U</u></Tool>
              <Tool $w={16} aria-label="Underline style"><Chev /></Tool>
              <Rule $m="0 6px" />
              <Tool $w={26} $dark aria-label="Borders">{icons.borders}</Tool>
              <Tool $w={18} $dark aria-label="Border style"><Chev /></Tool>
              <Rule $m="0 6px" />
              <Tool $w={26} $dark aria-label="Fill color">{icons.fill}</Tool>
              <Tool $w={18} $dark aria-label="Fill color list"><Chev /></Tool>
              <Tool $w={36} aria-label="Font color"><Svg w={20} h={24}><path d="m5 14 5-13 5 13M7 10h6" strokeWidth="1.4" /><path d="M0 19h20v5H0z" fill="#b0aeac" stroke="none" /></Svg></Tool>
              <Tool $w={10} $dark aria-label="Font color list"><Chev /></Tool>
            </Line>
          </Lines>
        </GroupBody>
        <Caption launch dim>Font</Caption>
      </Group>
      <Group $w={349}>
        <GroupBody $pad={9}>
          <Lines>
            <Line>
              <Tool $w={30} aria-label="Top align"><TextLines rows={[[2, 18], [7, 12], [12, 18]]} /></Tool>
              <Tool $w={30} aria-label="Middle align"><TextLines rows={[[6, 18], [11, 12], [16, 18]]} /></Tool>
              <Tool $w={30} aria-label="Bottom align"><TextLines rows={[[11, 18], [16, 12], [21, 18]]} /></Tool>
              <Rule $m="0 5px 0 3px" />
              <Tool $w={26} aria-label="Orientation">{icons.orient}</Tool>
              <Tool $w={14} aria-label="Orientation list"><Chev /></Tool>
            </Line>
            <Line>
              <Tool $w={30} aria-label="Align left"><AlignLines side={0} /></Tool>
              <Tool $w={30} aria-label="Center"><AlignLines side={1} /></Tool>
              <Tool $w={30} aria-label="Align right"><AlignLines side={2} /></Tool>
              <Rule $m="0 3px" />
              <Tool $w={30} aria-label="Decrease indent"><Indent /></Tool>
              <Tool $w={30} aria-label="Increase indent"><Indent flip /></Tool>
            </Line>
          </Lines>
          <Rule $h={74} $m="9px 9px 0 4px" />
          <Lines>
            <Line><Small $dim><IconSlot $w={20}>{icons.wrap}</IconSlot>Wrap Text</Small></Line>
            <Line><Small $dim><IconSlot $w={20}>{icons.merge}</IconSlot>Merge &amp; Center<IconSlot $w={28}><Chev /></IconSlot></Small></Line>
          </Lines>
        </GroupBody>
        <Caption launch dim>Alignment</Caption>
      </Group>
      <Group $w={194}>
        <GroupBody $pad={10}>
          <Lines>
            <Line>
              <SelectWrap $w={174}><RibbonSelect disabled aria-label="Number format"><option>General</option></RibbonSelect><Chev /></SelectWrap>
            </Line>
            <Line>
              <Tool $w={28} aria-label="Accounting format">{icons.money}</Tool>
              <Tool $w={16} aria-label="Accounting list"><Chev /></Tool>
              <Tool $w={38} aria-label="Percent style"><Svg w={18} h={20}><circle cx="4" cy="6" r="3" strokeWidth="1.5" /><circle cx="14" cy="15" r="3" strokeWidth="1.5" /><path d="M15 1 3 19" strokeWidth="1.5" /></Svg></Tool>
              <Tool $w={24} aria-label="Comma style"><Svg w={11} h={18}><path d="M1 15c4-1 5-3 5-5-3 1-5-1-5-4 0-5 9-6 9 1 0 6-4 9-8 10z" fill="currentColor" stroke="none" /></Svg></Tool>
              <Rule $m="0 3px 0 5px" />
              <Tool $w={30} aria-label="Increase decimal">{icons.decUp}</Tool>
              <Tool $w={30} aria-label="Decrease decimal">{icons.decDown}</Tool>
            </Line>
          </Lines>
        </GroupBody>
        <Caption launch dim>Number</Caption>
      </Group>
      <Group $w={239}>
        <GroupBody $pad={10}>
          <BigButton w={90} icon={icons.cond} a="Conditional" b="Formatting" arrow dim />
          <BigButton w={74} icon={icons.fmtTable} a="Format as" b="Table" arrow dim />
          <BigButton w={52} icon={icons.cellStyles} a="Cell" b="Styles" arrow dim />
        </GroupBody>
        <Caption>Styles</Caption>
      </Group>
      <Group $w={176}>
        <GroupBody $pad={10}>
          <BigButton w={52} icon={icons.insert} a="Insert" arrow />
          <BigButton w={52} icon={icons.del} a="Delete" arrow />
          <BigButton w={52} icon={icons.format} a="Format" arrow />
        </GroupBody>
        <Caption>Cells</Caption>
      </Group>
      <Group $w={249}>
        <GroupBody $pad={12}>
          <Stack $row={29} $w={113}>
            <Small $dim><IconSlot $w={22}>{icons.sigma}</IconSlot>AutoSum<IconSlot $w={26}><Chev /></IconSlot></Small>
            <Small $dim><IconSlot $w={22}>{icons.fillDown}</IconSlot>Fill<Chev /></Small>
            <Small><IconSlot $w={22}>{icons.eraser}</IconSlot>Clear<Chev /></Small>
          </Stack>
          <BigButton w={56} icon={icons.sort} a="Sort &" b="Filter" arrow dim />
          <BigButton w={56} icon={icons.find} a="Find &" b="Select" arrow />
        </GroupBody>
        <Caption>Editing</Caption>
      </Group>
      <Group $w={77}>
        <GroupBody><BigButton w={76} icon={icons.analyze} a="Analyze" b="Data" dim /></GroupBody>
        <Caption>Analysis</Caption>
      </Group>
      <Group $w={91}>
        <GroupBody><BigButton w={90} icon={icons.sensitivity} a="Sensitivity" arrow dim /></GroupBody>
        <Caption>Sensitivity</Caption>
      </Group>
      <Collapse aria-label="Collapse ribbon"><Svg w={12} h={8}><path d="m1 7 5-5 5 5" strokeWidth="1.5" /></Svg></Collapse>
    </Groups>
  </Ribbon>
);

const Formula = () => (
  <FormulaBar>
    <NameBox>
      <NameSelect aria-label="Name box"><option>Picture 2</option></NameSelect>
      <Svg w={8} h={5}><path d="M0 0h8L4 4.500z" fill="#777" stroke="none" /></Svg>
    </NameBox>
    <Grip $m="8px 17px 0 17px" />
    <EntryTools>
      <button aria-label="Cancel"><Svg w={15} h={14}><path d="m1 1 13 12M14 1 1 13" stroke="#c3c3c3" strokeWidth="1.8" /></Svg></button>
      <button aria-label="Enter"><Svg w={17} h={14}><path d="m1 8 5 5L16 1" stroke="#c3c3c3" strokeWidth="2.4" /></Svg></button>
      <button aria-label="Insert function"><Svg w={24} h={26}><text x="4" y="18" fontFamily="Liberation Serif, serif" fontStyle="italic" fontSize="19" fill="#555" stroke="#555" strokeWidth=".4">fx</text></Svg></button>
    </EntryTools>
    <FormulaField>
      <FormulaInput aria-label="Formula" />
      <Svg w={10} h={7}><path d="m1 6 4-4 4 4" stroke="#777" strokeWidth="2.4" /></Svg>
    </FormulaField>
  </FormulaBar>
);

const Document = () => (
  <Picture>
    <Floating />
    <Para>
      The large buildup in sales before and during June is due to Father’s Day. Ending inventories are supposed to equal 90% of the next month’s<br />
      sales in units. The ties cost the company $5 each.
    </Para>
    <Para>
      <PageTag>Page 335</PageTag>
      Purchases are paid for as follows: 50% in the month of purchase and the remaining 50% in the following month. All sales are on<br />
      credit, with no discount, and payable within 15 days. The company has found, however, that only 25% of a month’s sales are collected by<br />
      month-end. An additional 50% are collected in the following month, and the remaining 25% are collected in the second month following<br />
      sale. Bad debts have been negligible.
    </Para>
    <Para>The company’s monthly selling and administrative expenses are given below:</Para>
    <Expenses>
      <tbody>
        {expenses.map(([name, value]) => (
          <tr key={name}><RowName scope="row" $indent={!!value}>{name}</RowName><td>{value}</td></tr>
        ))}
      </tbody>
    </Expenses>
    <Para>
      All selling and administrative expenses are paid during the month, in cash, with the exception of depreciation and insurance expired. Land<br />
      will be purchased during May for $25,000 cash. The company declares dividends of $12,000 each quarter, payable in the first month of the<br />
      following quarter. The company’s balance sheet at March 31 is given below:
    </Para>
  </Picture>
);

const Worksheet = () => (
  <SheetArea>
    <Sheet>
      <Grid>
        <colgroup><col style={{ width: 34 }} />{columns.map(c => <col key={c} />)}</colgroup>
        <thead><tr><th aria-label="Select all"><Corner /></th>{columns.map(c => <th key={c} scope="col">{c}</th>)}</tr></thead>
        <tbody>
          {rowNumbers.map(r => <tr key={r}><th scope="row">{r}</th>{columns.map(c => <td key={c} />)}</tr>)}
        </tbody>
      </Grid>
      <Canvas>
        <Document />
        <Handle $x={585} $y={-11} /><Handle $x={1041} $y={-11} /><Handle $x={1497} $y={-11} />
        <Handle $x={585} $y={320} /><Handle $x={1497} $y={320} />
      </Canvas>
    </Sheet>
    <VScroll>
      <ScrollButton aria-label="Scroll up"><Tri d={UP} /></ScrollButton>
      <Track $grow={116} /><Thumb $grow={516} />
      <ScrollButton aria-label="Scroll down"><Tri d={DOWN} /></ScrollButton>
    </VScroll>
  </SheetArea>
);

const Bottom = () => (
  <>
    <SheetTabs>
      <TabArrows>
        <button aria-label="Previous sheet"><Svg w={6} h={10}><path d="M6 0v10L0 5z" fill="#bdbdbd" stroke="none" /></Svg></button>
        <button aria-label="Next sheet"><Svg w={6} h={10}><path d="M0 0v10l6-5z" fill="#0c6b37" stroke="none" /></Svg></button>
      </TabArrows>
      <Rule $h={21} $m="4px 0 0" />
      {sheetTabs.map(([name, w]) => <SheetTab key={name} $w={w} $on={name === 'Comprehensive Problem'}>{name}</SheetTab>)}
      <LastTab>Ethics</LastTab>
      <More>...</More>
      <button aria-label="New sheet"><Svg w={22} h={26}><circle cx="11" cy="14" r="9.5" stroke="#777" /><path d="M6 14h10M11 9v10" stroke="#777" strokeWidth="1.8" /></Svg></button>
      <Grip $m="7px 15px 0 17px" />
      <HScroll>
        <ScrollButton aria-label="Scroll left"><Tri d={LEFT} /></ScrollButton>
        <Track $grow={273} /><Thumb $grow={417} />
        <ScrollButton aria-label="Scroll right"><Tri d={RIGHT} /></ScrollButton>
      </HScroll>
    </SheetTabs>
    <StatusBar>
      <StatusText>Ready</StatusText>
      <ViewButton $on aria-label="Normal view"><Svg w={17} h={16}><path d="M1 1h15v14H1zM1 5.500h15M1 10.500h15M6 1v14M11 1v14" strokeWidth="1.5" /></Svg></ViewButton>
      <ViewButton aria-label="Page layout view"><Svg w={18} h={16}><path d="M1 1h16v14H1zM4.500 3.500h9v9h-9zM6.500 6h5M6.500 8h5M6.500 10h5" strokeWidth="1.3" /></Svg></ViewButton>
      <ViewButton aria-label="Page break view"><Svg w={18} h={16}><path d="M1 1h16v14H1zM1 10h10V1M6 1v9" strokeWidth="1.5" /></Svg></ViewButton>
      <button aria-label="Zoom out"><Svg w={16} h={12}><path d="M6 6h10" /></Svg></button>
      <Zoom type="range" aria-label="Zoom" min={0} max={100} defaultValue={49} />
      <button aria-label="Zoom in"><Svg w={10} h={10}><path d="M0 5h10M5 0v10" /></Svg></button>
      <Percent>98%</Percent>
    </StatusBar>
  </>
);

const WindowsBar = () => (
  <Taskbar>
    <Start aria-label="Start"><Svg w={20} h={20}><path d="M0 3l9-1.300V9.500H0zM10 1.500 20 0v9.500H10zM0 10.500h9v7.800L0 17zM10 10.500h10V20l-10-1.500z" fill="#000" stroke="none" /></Svg></Start>
    <TaskSearch><Mag s={20} w={1.5} /><TaskInput aria-label="Type here to search" placeholder="Type here to search" /></TaskSearch>
    {taskIcons.map(([name, icon, state]) => <AppIcon key={name} $state={state} aria-label={name}>{icon}</AppIcon>)}
    <Tray>
      <TrayItem $w={68} aria-label="Help"><Svg w={30} h={28}><circle cx="13" cy="13" r="11.5" fill="#0b8fd3" stroke="#fff" strokeWidth="2.5" /><path d="M9 10c0-6 9-5 8-.5-.5 2.500-4 3-4 6M13 17.500V20" stroke="#fff" strokeWidth="2.6" /><circle cx="22" cy="20" r="6.5" fill="#0b8fd3" stroke="none" /><path d="M22 16v1.500M22 19v5" stroke="#fff" strokeWidth="1.8" /></Svg></TrayItem>
      <TrayItem $w={52} aria-label="Weather"><Svg w={28} h={26}><path d="M7 15a5 5 0 0 1-1-9 7 7 0 0 1 13-1 5 5 0 0 1 2 10z" fill="#b5dcfa" stroke="#9acbf2" /><path d="M14 16a4 4 0 0 1 2-7 5 5 0 0 1 8 0 4 4 0 0 1 0 7z" fill="#e6f4fe" stroke="#9acbf2" /><path d="m8 17-2 4M15 16l-1 4M21 17l-2 4M9 22l-1 2" stroke="#2f87e6" strokeWidth="2.4" strokeLinecap="round" /></Svg></TrayItem>
      <Temp>27°C</Temp>
      <TrayItem $w={30} aria-label="Show hidden icons"><Svg w={16} h={10}><path d="m1 9 7-7 7 7" strokeWidth="1.5" /></Svg></TrayItem>
      <TrayItem $w={30} aria-label="Meet now"><Svg w={16} h={22}><rect x="1" y="6" width="10" height="10" rx="2" strokeWidth="1.4" /><path d="m11 10 3.500-2v7L11 13M3 3c2-2 5-2 7 0M3 19c2 2 5 2 7 0" strokeWidth="1.3" /></Svg></TrayItem>
      <TrayItem $w={30} aria-label="OneDrive"><Svg w={22} h={18}><path d="M5 13a4 4 0 0 1 0-7.500 6 6 0 0 1 11 0 4 4 0 0 1 2 7.500z" fill="#8d8d8d" stroke="#222" /><circle cx="15" cy="12" r="5.5" fill="#d9232e" stroke="none" /><path d="M12 12h6" stroke="#fff" strokeWidth="1.5" /></Svg></TrayItem>
      <TrayItem $w={30} aria-label="Network"><Svg w={16} h={16}><path d="M1 15C1 7 7 1 15 1M5 15c0-6 4-10 10-10M9 15c0-4 2-6 6-6" /><circle cx="14" cy="14" r="1.5" fill="currentColor" stroke="none" /></Svg></TrayItem>
      <TrayItem $w={30} aria-label="Battery"><Svg w={20} h={12}><path d="M1 1h16v10H1zM18.500 4v4" strokeWidth="1.3" /><path d="M3 3h9v6H3z" fill="currentColor" stroke="none" /></Svg></TrayItem>
      <TrayItem $w={32} aria-label="Volume"><Svg w={20} h={16}><path d="M1 5.500h3L8 2v12l-4-3.500H1zM11 5.500c1 1.500 1 3.500 0 5M13.500 3.500c2.500 2.500 2.500 6.500 0 9M16 1.500c4 3.500 4 9.500 0 13" /></Svg></TrayItem>
      <TrayItem $w={38} aria-label="Language ENG">ENG</TrayItem>
      <Clock><span>12:42</span><span>21-07-2021</span></Clock>
      <Notice aria-label="2 notifications"><Svg w={32} h={32}><path d="M0 1h20v15H9l-4 4v-4H0z" fill="#000" stroke="none" /><path d="M4 5.500h12M4 8.500h12M4 11.500h8" stroke="#fff" /><circle cx="19" cy="20" r="9.5" fill="#d5d5d5" stroke="#888" /><Glyph x={15} y={25} size={14}>2</Glyph></Svg></Notice>
    </Tray>
  </Taskbar>
);

export default function App() {
  return (
    <Shell>
      <GlobalStyle />
      <TopBar />
      <RibbonBar />
      <Formula />
      <Worksheet />
      <Bottom />
      <WindowsBar />
    </Shell>
  );
}
